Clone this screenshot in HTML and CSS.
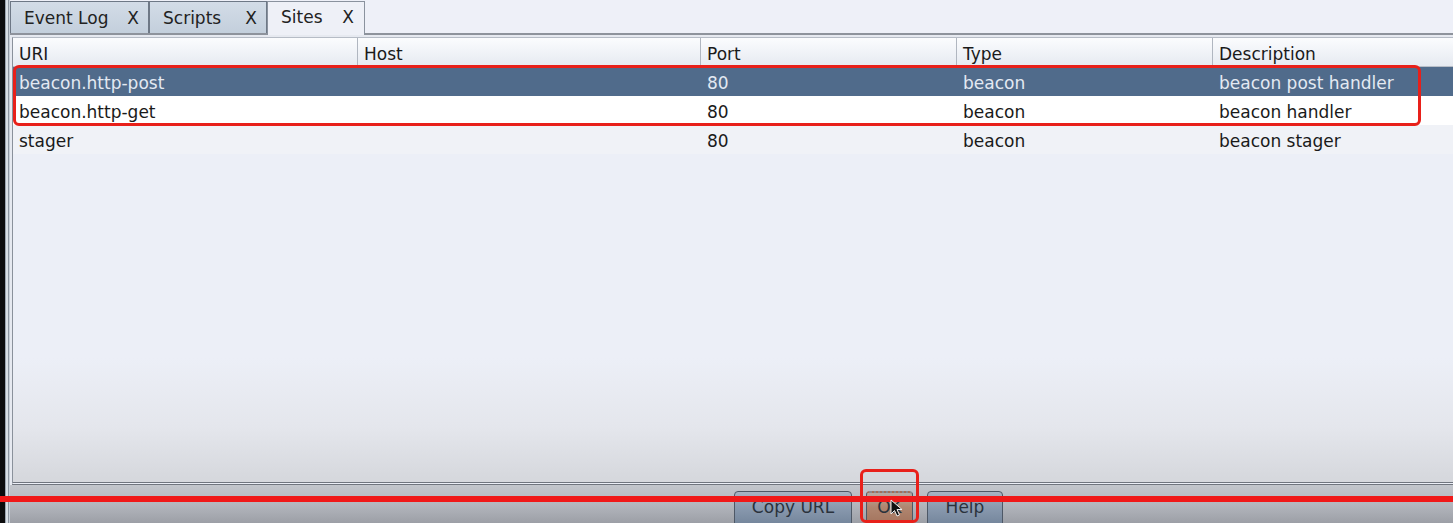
FILE: index.html
```html
<!DOCTYPE html>
<html>
<head>
<meta charset="utf-8">
<link rel="stylesheet" href="styles.css">
</head>
<body>
<div class="frame">
  <div class="edge"></div>
  <div class="edge2"></div>
  <div class="main">
    <div class="tabs">
      <div class="tab t1"><span>Event Log</span><span class="x">X</span></div>
      <div class="tab t2"><span>Scripts</span><span class="x">X</span></div>
      <div class="tab sel"><span>Sites</span><span class="x">X</span></div>
    </div>
    <div class="panel">
      <div class="table">
        <div class="row head">
          <div class="c c1">URI</div><div class="c c2">Host</div><div class="c c3">Port</div><div class="c c4">Type</div><div class="c c5">Description</div>
        </div>
        <div class="row r sel-row">
          <div class="c c1">beacon.http-post</div><div class="c c2"></div><div class="c c3">80</div><div class="c c4">beacon</div><div class="c c5">beacon post handler</div>
        </div>
        <div class="row r white">
          <div class="c c1">beacon.http-get</div><div class="c c2"></div><div class="c c3">80</div><div class="c c4">beacon</div><div class="c c5">beacon handler</div>
        </div>
        <div class="row r alt">
          <div class="c c1">stager</div><div class="c c2"></div><div class="c c3">80</div><div class="c c4">beacon</div><div class="c c5">beacon stager</div>
        </div>
        <div class="filler"></div>
      </div>
    </div>
    <div class="buttons">
      <div class="btn copy">Copy URL</div>
      <div class="btn ok">OK</div>
      <div class="btn help">Help</div>
    </div>
  </div>
</div>
<div class="mark box-rows"></div>
<div class="mark box-ok"></div>
<div class="mark line"></div>
<svg class="cursor" width="14" height="20" viewBox="0 0 14 20"><path d="M1 1 L1 15 L4.5 11.5 L7 17 L9.5 16 L7 10.5 L12 10.5 Z" fill="#111" stroke="#eee" stroke-width="1"/></svg>
</body>
</html>
```
FILE: styles.css
```css
html, body {
  margin: 0;
  padding: 0;
}
body {
  width: 1453px;
  height: 523px;
  overflow: hidden;
  position: relative;
  font-family: "DejaVu Sans", "Noto Sans", sans-serif;
  font-size: 17px;
  color: #1a1a1a;
  background: #eef0f7;
}
.frame {
  display: flex;
  height: 523px;
}
.edge {
  width: 5px;
  background: #0c0c0e;
}
.edge2 {
  width: 5px;
  background: linear-gradient(90deg, #9aa4b0 0, #9aa4b0 1px, #d8dfe6 1px, #d8dfe6 3px, #8d96a2 3px, #8d96a2 4px, #c6ced8 4px);
}
.main {
  flex: 1;
  display: flex;
  flex-direction: column;
  min-width: 0;
}
.tabs {
  display: flex;
  align-items: flex-end;
  background: #eef0f8;
  border-bottom: 2px solid #8e939c;
  box-sizing: border-box;
  height: 35px;
}
.tab {
  height: 32px;
  box-sizing: border-box;
  display: flex;
  align-items: center;
  justify-content: space-between;
  padding: 0 9px 0 13px;
  background: linear-gradient(#d3dce7, #c3cfdc);
  border: 1px solid #6e7886;
  border-bottom: none;
  color: #222;
}
.t1 { width: 139px; }
.t2 { width: 118px; }
.tab.sel {
  width: 98px;
  height: 34px;
  margin-bottom: -2px;
  background: #eef0f7;
  padding: 0 10px 4px 13px;
  border-color: #8a929e;
}
.panel {
  flex: 1;
  display: flex;
  padding-top: 2px;
  padding-left: 2px;
  background: #e6e9f0;
  min-height: 0;
}
.table {
  flex: 1;
  display: flex;
  flex-direction: column;
  border-left: 1px solid #8a919b;
  border-top: 1px solid #b6bcc6;
  border-bottom: 3px double #70757e;
  background: linear-gradient(#eceff7 0, #eceff7 320px, #e4e6ec 390px, #d6d8dd 440px);
}
.row {
  display: grid;
  grid-template-columns: 345px 343px 256px 256px 1fr;
}
.c {
  padding-left: 6px;
  white-space: nowrap;
  overflow: hidden;
  display: flex;
  align-items: center;
}
.head {
  height: 28px;
  background: linear-gradient(#fbfcfe, #e6eaf1);
  border-bottom: 1px solid #b8bec8;
}
.head .c {
  border-right: 1px solid #b0b6c0;
  padding-top: 4px;
}
.head .c5 { border-right: none; }
.r { height: 29px; }
.r .c { padding-top: 3px; }
.sel-row {
  background: #506b8b;
  color: #e3e9f2;
}
.white { background: #ffffff; }
.alt { background: #f0f2f7; }
.filler { flex: 1; }
.buttons {
  height: 38px;
  flex: none;
  display: flex;
  align-items: flex-start;
  gap: 14px;
  padding-left: 724px;
  padding-top: 6px;
  box-sizing: border-box;
  background: linear-gradient(#c3c6cc, #b4b7be 50%, #9c9fa6);
}
.btn {
  height: 38px;
  flex: none;
  box-sizing: border-box;
  border: 1px solid #4e5866;
  border-radius: 4px;
  display: flex;
  align-items: flex-start;
  justify-content: center;
  padding-top: 5px;
  color: #2a323c;
  background: linear-gradient(#a8b4c3 0, #8b9bb0 40%, #6f8197);
}
.copy { width: 118px; }
.ok {
  width: 47px;
  background: linear-gradient(#b8aca4, #b08670 40%, #a06f58);
  border-top: 2px dotted #8a8a90;
  padding-top: 4px;
}
.help { width: 76px; }
.mark {
  position: absolute;
  box-sizing: border-box;
  border: 3px solid #e8201a;
  border-radius: 6px;
}
.box-rows {
  left: 13px;
  top: 65px;
  width: 1408px;
  height: 61px;
}
.box-ok {
  left: 860px;
  top: 469px;
  width: 59px;
  height: 54px;
}
.line {
  left: 0;
  top: 496px;
  width: 1453px;
  height: 6px;
  border: none;
  border-radius: 0;
  background: #f01818;
}
.cursor {
  position: absolute;
  left: 890px;
  top: 499px;
}
```
